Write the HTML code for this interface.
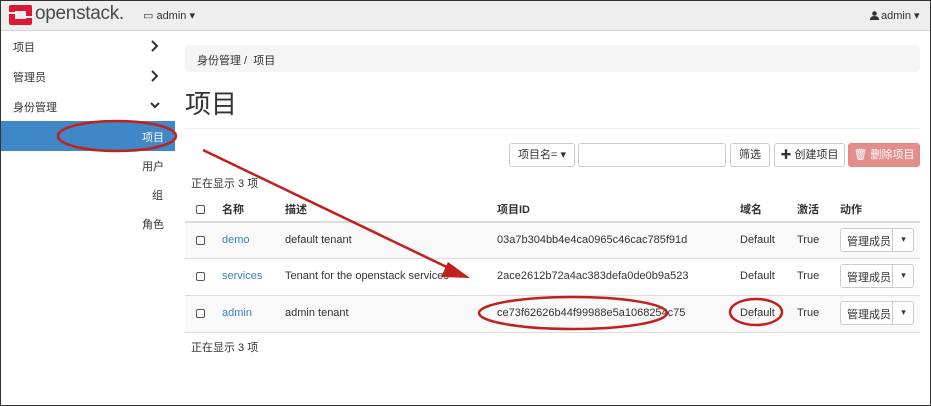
<!DOCTYPE html>
<html><head><meta charset="utf-8"><style>
*{box-sizing:border-box;margin:0;padding:0}
body{width:931px;height:406px;overflow:hidden;background:#fff;font-family:"Liberation Sans","Noto Sans CJK SC",sans-serif;font-size:11px;color:#333;position:relative}
.frame{position:absolute;left:0;top:0;width:931px;height:406px;border:1px solid #333;pointer-events:none;z-index:10}
.nav{position:absolute;left:0;top:0;width:931px;height:31px;background:#eee;border-bottom:1px solid #d5d5d5}
.abs{position:absolute;white-space:nowrap}
.side div{position:absolute;font-size:11px}
.active{position:absolute;left:1px;top:121px;width:174px;height:30px;background:#3f87c6}
.bc{position:absolute;left:185px;top:45px;width:735px;height:27px;background:#f5f5f5;border-radius:4px}
.btn{position:absolute;top:143px;height:24px;border:1px solid #ccc;border-radius:3px;background:#fff;font-size:11px;text-align:center;line-height:22px}
.row{position:absolute;left:185px;width:735px;border-top:1px solid #ddd}
.link{color:#3a7fc1}
.cb{position:absolute;width:9px;height:9px;border:1px solid #555;border-radius:2px;left:196px}
.mg{position:absolute;left:840px;width:74px;height:24px;border:1px solid #ccc;border-radius:3px;background:#fff}
</style></head><body>
<div class="nav"></div>
<svg class="abs" style="left:9px;top:5px" width="23" height="20" viewBox="0 0 23 20"><rect x="0" y="0" width="23" height="20" rx="2" fill="#da1a32"/><rect x="6" y="6" width="11" height="8" fill="#eee"/><rect x="0" y="7" width="6" height="2" fill="#eee"/><rect x="17" y="11" width="6" height="2" fill="#eee"/></svg>
<div class="abs" style="left:35px;top:3px;font-size:19px;color:#4a4a4a;letter-spacing:-0.3px">openstack.</div>
<div class="abs" style="left:143px;top:9px;font-size:11px">▭ admin ▾</div>
<svg class="abs" style="left:870px;top:11px" width="9" height="9" viewBox="0 0 9 9"><circle cx="4.5" cy="2.5" r="2.3" fill="#333"/><path d="M0 9 Q0 5 4.5 5 Q9 5 9 9Z" fill="#333"/></svg>
<div class="abs" style="left:881px;top:9px;font-size:11px">admin ▾</div>
<div class="side">
<div style="left:13px;top:39px">项目</div>
<div style="left:13px;top:69px">管理员</div>
<div style="left:13px;top:99px">身份管理</div>
</div>
<svg class="abs" style="left:150px;top:40px" width="10" height="72" viewBox="0 0 10 72"><g fill="none" stroke="#333" stroke-width="2"><path d="M2 1 L7 6 L2 11"/><path d="M2 31 L7 36 L2 41"/><path d="M1 63 L5 67 L9 63"/></g></svg>
<div class="active"></div>
<div class="abs" style="left:142px;top:129px;color:#fff">项目</div>
<div class="abs" style="left:142px;top:158px">用户</div>
<div class="abs" style="left:152px;top:187px">组</div>
<div class="abs" style="left:142px;top:216px">角色</div>
<div class="bc"></div>
<div class="abs" style="left:197px;top:52px">身份管理 / &nbsp;项目</div>
<div class="abs" style="left:185px;top:84px;font-size:26px;color:#333">项目</div>
<div class="abs" style="left:185px;top:128px;width:735px;border-top:1px solid #eee"></div>
<div class="btn" style="left:509px;width:66px">项目名= ▾</div>
<div class="btn" style="left:578px;width:148px"></div>
<div class="btn" style="left:730px;width:40px">筛选</div>
<div class="btn" style="left:774px;width:71px">✚ 创建项目</div>
<div class="btn" style="left:848px;width:72px;background:#e38e8b;border-color:#e08a86;color:#fff">🗑︎ 删除项目</div>
<div class="abs" style="left:191px;top:175px">正在显示 3 项</div>
<div class="cb" style="top:205px"></div>
<div class="abs" style="left:222px;top:201px;font-weight:bold">名称</div>
<div class="abs" style="left:285px;top:201px;font-weight:bold">描述</div>
<div class="abs" style="left:497px;top:201px;font-weight:bold">项目ID</div>
<div class="abs" style="left:740px;top:201px;font-weight:bold">域名</div>
<div class="abs" style="left:797px;top:201px;font-weight:bold">激活</div>
<div class="abs" style="left:840px;top:201px;font-weight:bold">动作</div>
<div class="row" style="top:221px;height:37px;background:#f9f9f9;border-top:2px solid #ddd"></div>
<div class="row" style="top:258px;height:37px"></div>
<div class="row" style="top:295px;height:37px;background:#f9f9f9"></div>
<div class="row" style="top:332px;height:0"></div>
<div class="cb" style="top:236px"></div><div class="cb" style="top:272px"></div><div class="cb" style="top:309px"></div>
<div class="abs link" style="left:222px;top:234px">demo</div>
<div class="abs" style="left:285px;top:234px">default tenant</div>
<div class="abs" style="left:497px;top:234px">03a7b304bb4e4ca0965c46cac785f91d</div>
<div class="abs" style="left:740px;top:234px">Default</div>
<div class="abs" style="left:797px;top:234px">True</div>
<div class="abs link" style="left:222px;top:270px">services</div>
<div class="abs" style="left:285px;top:270px">Tenant for the openstack services</div>
<div class="abs" style="left:497px;top:270px">2ace2612b72a4ac383defa0de0b9a523</div>
<div class="abs" style="left:740px;top:270px">Default</div>
<div class="abs" style="left:797px;top:270px">True</div>
<div class="abs link" style="left:222px;top:307px">admin</div>
<div class="abs" style="left:285px;top:307px">admin tenant</div>
<div class="abs" style="left:497px;top:307px">ce73f62626b44f99988e5a1068254c75</div>
<div class="abs" style="left:740px;top:307px">Default</div>
<div class="abs" style="left:797px;top:307px">True</div>
<div class="mg" style="top:228px"></div><div class="mg" style="top:264px"></div><div class="mg" style="top:301px"></div>
<div class="abs" style="left:847px;top:233px">管理成员</div><div class="abs" style="left:892px;top:228px;height:24px;border-left:1px solid #ccc;width:22px;text-align:center;line-height:22px;font-size:9px">▾</div>
<div class="abs" style="left:847px;top:269px">管理成员</div><div class="abs" style="left:892px;top:264px;height:24px;border-left:1px solid #ccc;width:22px;text-align:center;line-height:22px;font-size:9px">▾</div>
<div class="abs" style="left:847px;top:306px">管理成员</div><div class="abs" style="left:892px;top:301px;height:24px;border-left:1px solid #ccc;width:22px;text-align:center;line-height:22px;font-size:9px">▾</div>
<div class="abs" style="left:191px;top:339px">正在显示 3 项</div>
<svg class="abs" style="left:0;top:0" width="931" height="406">
<g fill="none" stroke="#c0201e" stroke-width="2.5">
<ellipse cx="117" cy="136" rx="59" ry="15"/>
<ellipse cx="573" cy="313" rx="94" ry="16"/>
<ellipse cx="756" cy="312" rx="26" ry="13"/>
<line x1="203" y1="150" x2="455" y2="271"/>
</g>
<polygon points="470,278 448,262 441,277" fill="#c0201e"/>
</svg>
<div class="frame"></div>
</body></html>
